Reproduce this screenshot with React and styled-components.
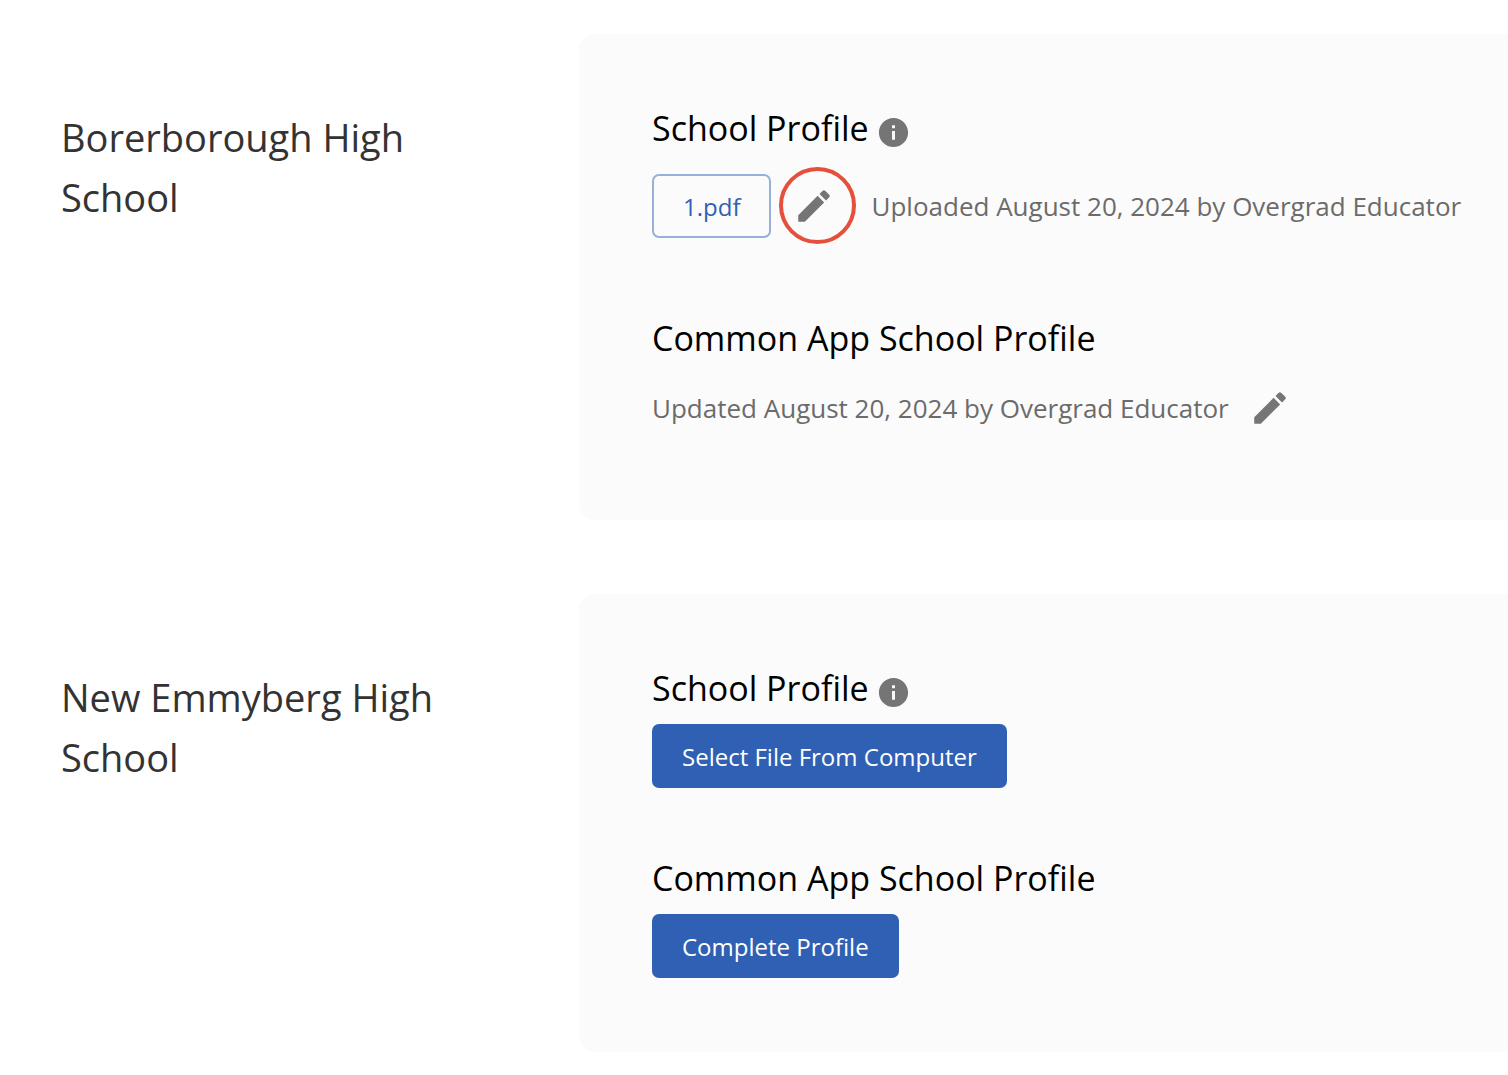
import React from "react";
import styled, { createGlobalStyle, css } from "styled-components";
import { MdEdit, MdInfo } from "react-icons/md";

const schools = [
  {
    name: "Borerborough High School",
    file: "1.pdf",
    uploaded: "Uploaded August 20, 2024 by Overgrad Educator",
    updated: "Updated August 20, 2024 by Overgrad Educator",
  },
  { name: "New Emmyberg High School" },
];

function App() {
  return (
    <Page>
      <GlobalStyle />
      {schools.map((school) => (
        <School key={school.name}>
          <SchoolName>{school.name}</SchoolName>
          <Panel>
            <Section>
              <TitleRow>
                <Title>School Profile</Title>
                <InfoIcon />
              </TitleRow>
              {school.file ? (
                <FileRow>
                  <Button $outline>{school.file}</Button>
                  <EditButton $ring aria-label="Edit school profile">
                    <MdEdit />
                  </EditButton>
                  <Note $indent>{school.uploaded}</Note>
                </FileRow>
              ) : (
                <Button>Select File From Computer</Button>
              )}
            </Section>

            <Section>
              <TitleRow>
                <Title>Common App School Profile</Title>
              </TitleRow>
              {school.updated ? (
                <UpdatedRow>
                  <Note>{school.updated}</Note>
                  <EditButton aria-label="Edit Common App school profile">
                    <MdEdit />
                  </EditButton>
                </UpdatedRow>
              ) : (
                <Button>Complete Profile</Button>
              )}
            </Section>
          </Panel>
        </School>
      ))}
    </Page>
  );
}

export default App;

const GlobalStyle = createGlobalStyle`
  *,
  *::after {
    box-sizing: border-box;
  }

  body {
    margin: 0;
    background: #fff;
    font-family: "Open Sans", "Noto Sans", sans-serif;
  }
`;

const Page = styled.main`
  display: flex;
  flex-direction: column;
  gap: 74px;
  padding: 34px 0 22px 61px;
  overflow: hidden;
`;

const School = styled.section`
  display: grid;
  grid-template-columns: 444px 1fr;
  column-gap: 74px;
`;

const SchoolName = styled.h2`
  margin: 73px 0 0;
  color: #333;
  font-size: 38px;
  font-weight: 400;
  line-height: 60px;
`;

const Panel = styled.div`
  display: flex;
  flex-direction: column;
  gap: 53px;
  padding: 57px 0 74px 73px;
  border-radius: 16px 0 0 16px;
  background: #fbfbfb;
`;

const Section = styled.div`
  display: flex;
  flex-direction: column;
  align-items: flex-start;
`;

const TitleRow = styled.div`
  display: flex;
  align-items: center;
  gap: 7px;
  height: 73px;
`;

const Title = styled.h3`
  margin: 0;
  color: #000;
  font-size: 34px;
  font-weight: 400;
`;

const InfoIcon = styled(MdInfo)`
  width: 35px;
  height: 35px;
  margin-top: 10px;
  color: #757575;
`;

const FileRow = styled.div`
  display: flex;
  align-items: center;
  gap: 4px;
  height: 84px;
`;

const UpdatedRow = styled.div`
  display: flex;
  align-items: center;
  gap: 2px;
  height: 68px;
  margin-bottom: 4px;
`;

const Button = styled.button`
  height: 64px;
  padding: 0 30px;
  border: 0;
  border-radius: 7px;
  background: #2f60b3;
  color: #fff;
  font-family: inherit;
  font-size: 24px;
  cursor: pointer;

  ${(props) =>
    props.$outline &&
    css`
      padding: 0 29px;
      border: 2px solid #97afd9;
      background: transparent;
      color: #2f60b3;
    `}
`;

const EditButton = styled.button`
  position: relative;
  display: flex;
  align-items: center;
  justify-content: center;
  width: 78px;
  height: 66px;
  padding: 0;
  border: 0;
  background: transparent;
  color: #757575;
  font-size: 42px;
  cursor: pointer;

  ${(props) =>
    props.$ring &&
    css`
      &::after {
        content: "";
        position: absolute;
        top: -6px;
        left: 4px;
        width: 77px;
        height: 77px;
        border: 4px solid #e5503c;
        border-radius: 50%;
      }
    `}
`;

const Note = styled.p`
  margin: 0;
  padding-left: ${(props) => (props.$indent ? "14px" : "0")};
  color: #6b6b6b;
  font-size: 26px;
  white-space: nowrap;
`;
